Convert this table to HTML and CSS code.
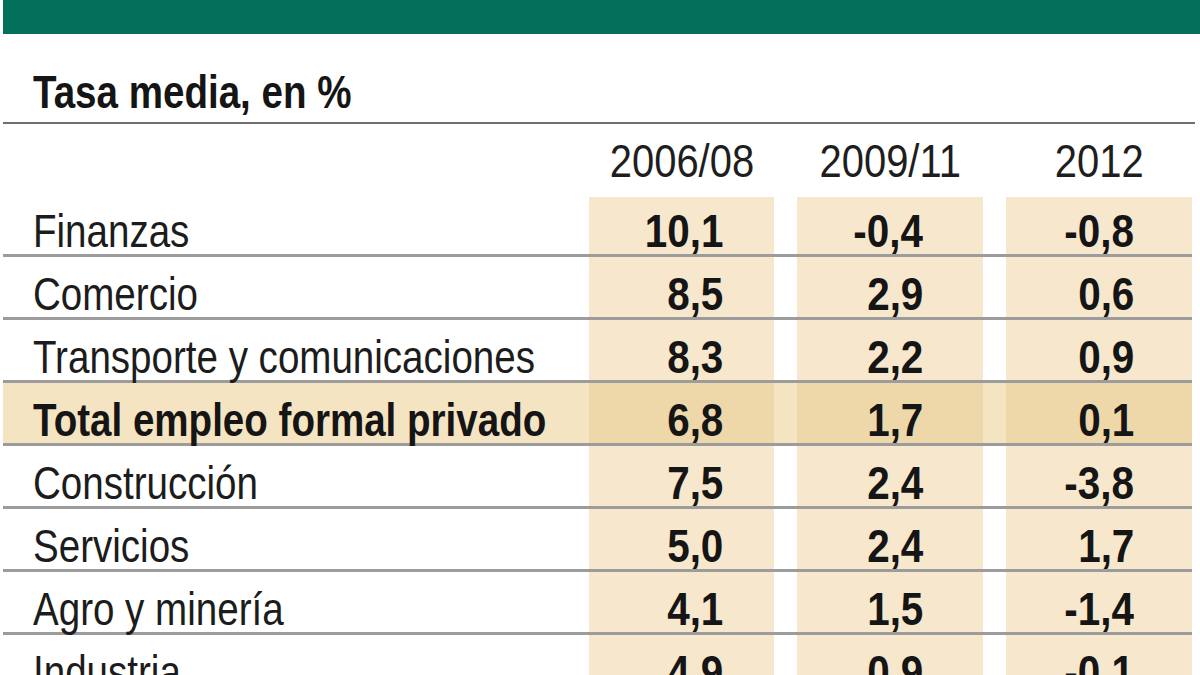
FILE: index.html
```html
<!DOCTYPE html>
<html lang="es">
<head>
<meta charset="utf-8">
<title>Tasa media, en %</title>
<link rel="stylesheet" href="styles.css">
</head>
<body>
<div class="topbar"></div>
<h1 class="title"><span class="nl">Tasa media, en %</span></h1>
<div class="table">
  <div class="row head">
    <div class="label"></div>
    <div class="hcell"><span class="nc">2006/08</span></div>
    <div class="hcell"><span class="nc">2009/11</span></div>
    <div class="hcell"><span class="nc">2012</span></div>
  </div>
  <div class="row first">
    <div class="label"><span class="nl">Finanzas</span></div>
    <div class="cell c1"><span class="nr">10,1</span></div>
    <div class="cell c2"><span class="nr">-0,4</span></div>
    <div class="cell c3"><span class="nr">-0,8</span></div>
  </div>
  <div class="row">
    <div class="label"><span class="nl">Comercio</span></div>
    <div class="cell c1"><span class="nr">8,5</span></div>
    <div class="cell c2"><span class="nr">2,9</span></div>
    <div class="cell c3"><span class="nr">0,6</span></div>
  </div>
  <div class="row">
    <div class="label"><span class="nl">Transporte y comunicaciones</span></div>
    <div class="cell c1"><span class="nr">8,3</span></div>
    <div class="cell c2"><span class="nr">2,2</span></div>
    <div class="cell c3"><span class="nr">0,9</span></div>
  </div>
  <div class="row total">
    <div class="label"><span class="nl">Total empleo formal privado</span></div>
    <div class="cell c1"><span class="nr">6,8</span></div>
    <div class="cell c2"><span class="nr">1,7</span></div>
    <div class="cell c3"><span class="nr">0,1</span></div>
  </div>
  <div class="row">
    <div class="label"><span class="nl">Construcción</span></div>
    <div class="cell c1"><span class="nr">7,5</span></div>
    <div class="cell c2"><span class="nr">2,4</span></div>
    <div class="cell c3"><span class="nr">-3,8</span></div>
  </div>
  <div class="row">
    <div class="label"><span class="nl">Servicios</span></div>
    <div class="cell c1"><span class="nr">5,0</span></div>
    <div class="cell c2"><span class="nr">2,4</span></div>
    <div class="cell c3"><span class="nr">1,7</span></div>
  </div>
  <div class="row">
    <div class="label"><span class="nl">Agro y minería</span></div>
    <div class="cell c1"><span class="nr">4,1</span></div>
    <div class="cell c2"><span class="nr">1,5</span></div>
    <div class="cell c3"><span class="nr">-1,4</span></div>
  </div>
  <div class="row">
    <div class="label"><span class="nl">Industria</span></div>
    <div class="cell c1"><span class="nr">4,9</span></div>
    <div class="cell c2"><span class="nr">0,9</span></div>
    <div class="cell c3"><span class="nr">-0,1</span></div>
  </div>
</div>
</body>
</html>
```

FILE: styles.css
```css
html, body {
  margin: 0;
  padding: 0;
  background: #ffffff;
  overflow: hidden;
}

body {
  width: 1200px;
  height: 675px;
  font-family: "Liberation Sans", Arial, sans-serif;
  color: #1c1c1c;
}

/* condensed look: Arial-metric font narrowed horizontally */
.nl, .nc, .nr {
  display: inline-block;
  white-space: nowrap;
}
.nl { transform: scaleX(0.82); transform-origin: left center; }
.nc { transform: scaleX(0.85); transform-origin: center center; }
.nr { transform: scaleX(0.86); transform-origin: right center; }

.topbar {
  margin-left: 3px;
  height: 34px;
  background: #03705c;
}

.title {
  margin: 34px 5px 0 3px;
  padding: 0 0 7px 30px;
  font-size: 47px;
  line-height: 47px;
  font-weight: 700;
  color: #151515;
  border-bottom: 2px solid #6e6e6e;
}

.table {
  margin-left: 3px;
  width: 1189px;
}

.row {
  display: grid;
  grid-template-columns: 563px 185px 186px 186px;
  column-gap: 23px;
  height: 63px;
  box-sizing: border-box;
  border-bottom: 3px solid #9c9c9c;
}

.row.head {
  height: 70px;
  border-bottom: none;
}

.hcell {
  padding-top: 13px;
  font-size: 47px;
  line-height: 47px;
  text-align: center;
  color: #1e1e1e;
}

.label {
  padding-left: 30px;
  padding-top: 14px;
  font-size: 47px;
  line-height: 46px;
  white-space: nowrap;
}

.cell {
  background: #f7e8cd;
  padding-top: 14px;
  font-size: 47px;
  line-height: 46px;
  font-weight: 700;
  text-align: right;
  color: #151515;
}

.row.first .cell {
  margin-top: 3px;
  padding-top: 11px;
}

.c1 { padding-right: 51px; }
.c2 { padding-right: 60px; }
.c3 { padding-right: 58px; }

.row.total {
  background: #f5e4c2;
}

.row.total .label {
  font-weight: 700;
  color: #151515;
}

.row.total .cell {
  background: #eed8aa;
}
```
